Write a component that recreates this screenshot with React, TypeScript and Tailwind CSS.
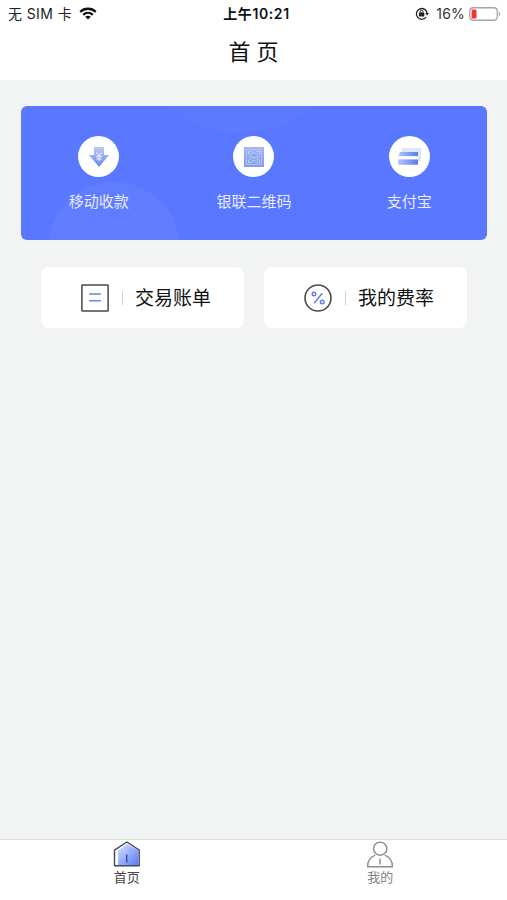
import React from 'react';

function WifiIcon() {
  return (
    <svg className="-mt-0.5" width="18" height="13" viewBox="0 0 18 13" fill="none" stroke="#111" strokeWidth="2.3">
      <path d="M1.2 4.8C5.5.7 12.5.7 16.8 4.8" />
      <path d="M4.2 7.8c2.8-2.5 6.8-2.5 9.6 0" />
      <path d="M9 12.4 6.2 9.8c1.500-1.400 4.100-1.400 5.600 0z" fill="#111" stroke="none" />
    </svg>
  );
}

function RotationLockIcon() {
  return (
    <svg className="-mt-0.5" width="14" height="13" viewBox="0 0 14 13" fill="none" stroke="#222" strokeWidth="1.3">
      <path d="M11.1 10.2A5.4 5.4 0 1 1 12.2 6.500" />
      <path d="M10.200 6h3.800l-1.900 2.600z" fill="#222" stroke="none" />
      <rect x="3.9" y="5.5" width="5.4" height="4" rx=".4" fill="#222" stroke="none" />
      <path d="M5.200 5.800V4.600a1.400 1.400 0 0 1 2.800 0v1.200" strokeWidth="1" />
    </svg>
  );
}

function BatteryIcon() {
  return (
    <svg className="-mt-px" width="32" height="14" viewBox="0 0 32 14" fill="none">
      <rect x=".75" y=".75" width="27.5" height="12.5" rx="3.4" stroke="#a5a5a5" strokeWidth="1.3" />
      <rect x="2.6" y="2.5" width="4.9" height="9" rx="1.3" fill="#f5342f" />
      <path d="M29.8 4.8c1.8.7 1.8 3.700 0 4.400z" fill="#999" />
    </svg>
  );
}

function CollectIcon() {
  return (
    <svg width="22" height="22" viewBox="0 0 22 22" fill="none">
      <defs>
        <linearGradient id="collect" x1="0" y1="0" x2="0" y2="1">
          <stop stopColor="#bccbf7" />
          <stop offset="1" stopColor="#6888ec" />
        </linearGradient>
      </defs>
      <path d="M6 1h10v8h5L11 21 1 9h5z" fill="url(#collect)" />
      <path d="m8.500 6.500 2.500 4 2.500-4M11 10v5M8 10.800h6M8.300 13h5.400" stroke="#e9effd" strokeWidth="1.1" />
    </svg>
  );
}

function QrIcon() {
  return (
    <svg width="22" height="22" viewBox="0 0 22 22" fill="none">
      <defs>
        <linearGradient id="scan" x1="0" y1="0" x2="0" y2="1">
          <stop stopColor="#a4b7f1" />
          <stop offset="1" stopColor="#819bea" />
        </linearGradient>
      </defs>
      <rect x="1" y="1" width="20" height="20" fill="url(#scan)" />
      <rect x="3.500" y="3.500" width="15" height="15" stroke="#b9c8f6" strokeWidth=".8" />
      <path d="M5.500 8.500v-3h3M13.500 5.500h3v3M16.500 13.500v3h-3M8.500 16.500h-3v-3" stroke="#c1cff7" />
      <circle cx="11" cy="11" r="4.2" fill="#8fa6ed" stroke="#bac9f7" />
      <path d="M8 10.500c1 1.400 2 .1 3 1s2 .3 3-1" stroke="#cbd7fa" />
    </svg>
  );
}

function CardsIcon() {
  return (
    <svg width="24" height="20" viewBox="0 0 24 20" fill="none">
      <defs>
        <linearGradient id="cards" x1="0" y1="0" x2="1" y2="0">
          <stop stopColor="#b2c5fa" />
          <stop offset="1" stopColor="#597de9" />
        </linearGradient>
      </defs>
      <path d="M5 1h19v13H5z" fill="#dfe5fb" />
      <path d="M3 5h18v4.500H1.200zM1.200 12.300H21v5.500H1.200z" fill="url(#cards)" />
      <path d="M1.200 9.300H21v3H1.200z" fill="#fff" />
    </svg>
  );
}

function BillIcon() {
  return (
    <svg width="28" height="28" viewBox="0 0 28 28" fill="none">
      <rect x=".9" y=".9" width="26.2" height="26.2" rx=".5" stroke="#484848" strokeWidth="1.5" />
      <path d="M8 10h12M8 16.800h12" stroke="#6c83f0" strokeWidth="1.5" />
    </svg>
  );
}

function RateIcon() {
  return (
    <svg width="28" height="28" viewBox="0 0 28 28" fill="none">
      <circle cx="14" cy="14" r="13" stroke="#4b4b4b" strokeWidth="1.6" />
      <g stroke="#6378ee" strokeWidth="1.4">
        <path d="m18.200 9.200-8 10" />
        <circle cx="10" cy="10" r="1.8" />
        <circle cx="18.200" cy="18" r="1.8" />
      </g>
    </svg>
  );
}

function HomeIcon() {
  return (
    <svg width="28" height="26" viewBox="0 0 28 26" fill="none">
      <defs>
        <linearGradient id="home" x1="0" y1="0" x2="1" y2="1">
          <stop offset=".15" stopColor="#c4d4ff" />
          <stop offset="1" stopColor="#587cf9" />
        </linearGradient>
      </defs>
      <path d="M5 9.400 14.200 3l11 6.800v14.300H5z" fill="url(#home)" />
      <path d="M1.500 9.200 13.900 1l12.300 8.200v15.600H1.500z" stroke="#45475a" strokeWidth="1.4" strokeLinejoin="round" />
      <path d="M13.700 13.500v8" stroke="#384a96" strokeWidth="1.4" />
    </svg>
  );
}

function PersonIcon() {
  return (
    <svg width="28" height="27" viewBox="0 0 28 27" fill="none" stroke="#8b8b8b" strokeWidth="1.4">
      <circle cx="14.2" cy="7.7" r="6.6" />
      <path d="M9.300 14.200C4.400 16 1.600 20 1.600 25.800h24.800c0-5.800-2.800-9.800-7.700-11.600M14 17.500v6" />
    </svg>
  );
}

const services = [
  { label: '移动收款', icon: <CollectIcon /> },
  { label: '银联二维码', icon: <QrIcon /> },
  { label: '支付宝', icon: <CardsIcon /> },
];

const shortcuts = [
  { label: '交易账单', icon: <BillIcon /> },
  { label: '我的费率', icon: <RateIcon /> },
];

export default function App() {
  return (
    <div className="flex h-[900px] w-[507px] flex-col overflow-hidden bg-[#f2f4f4] font-['Inter','Noto_Sans_CJK_SC',sans-serif] text-[#111]">
      <header className="h-20 shrink-0 bg-white">
        <div className="grid h-7 grid-cols-3 items-center pl-2 pr-1.5 text-[14px] leading-7">
          <div className="flex items-center gap-[7px] whitespace-pre text-[#222]">
            <span className="tracking-[0.4px]">无 SIM 卡</span>
            <WifiIcon />
          </div>
          <div className="pl-1 text-center font-semibold tracking-[0.6px]">上午10:21</div>
          <div className="flex items-center justify-end">
            <RotationLockIcon />
            <span className="ml-[7px] mr-1 tracking-[0.2px] text-[#333]">16%</span>
            <BatteryIcon />
          </div>
        </div>
        <h1 className="flex h-12 items-center justify-center whitespace-pre text-[22px] font-normal">首 页</h1>
      </header>

      <main className="flex-1 pl-[21px] pr-5 pt-[26px]">
        <section className="relative h-[134px] overflow-hidden rounded-[6px] bg-[#5977ff]">
          <div className="absolute left-[27px] top-[76px] size-[132px] rounded-full bg-[#607dff]" />
          <div className="absolute -top-[186px] left-[113px] size-[214px] rounded-full bg-[#5c7aff]" />
          <div className="relative grid h-full grid-cols-3 pt-[30px]">
            {services.map((s) => (
              <div key={s.label} className="flex flex-col items-center">
                <div className="flex size-[41px] items-center justify-center rounded-full bg-white">{s.icon}</div>
                <span className="mt-[14px] text-[15px] leading-[22px] text-[#e7ebff]">{s.label}</span>
              </div>
            ))}
          </div>
        </section>

        <section className="ml-[20px] mr-[20px] mt-[27px] grid grid-cols-2 gap-5">
          {shortcuts.map((s) => (
            <div key={s.label} className="flex h-[61px] items-center rounded-lg bg-white pl-10">
              {s.icon}
              <span className="ml-[13px] h-[14px] w-px bg-[#d2d2d2]" />
              <span className="ml-[12px] pt-0.5 text-[19px] leading-7">{s.label}</span>
            </div>
          ))}
        </section>
      </main>

      <nav className="grid h-[61px] shrink-0 grid-cols-2 border-t border-[#dcdede] bg-white text-[13px] leading-[18px]">
        <div className="flex flex-col items-center pt-px">
          <HomeIcon />
          <span className="mt-px text-[#444]">首页</span>
        </div>
        <div className="flex flex-col items-center pt-px">
          <PersonIcon />
          <span className="text-[#858585]">我的</span>
        </div>
      </nav>
    </div>
  );
}
